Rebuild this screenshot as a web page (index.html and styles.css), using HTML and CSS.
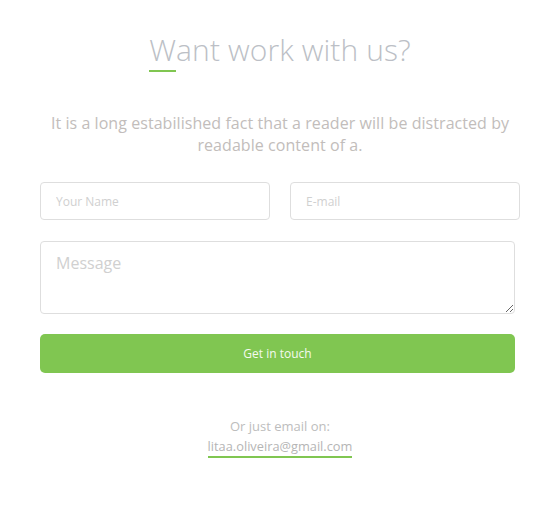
FILE: index.html
```html
<!DOCTYPE html>
<html>
<head>
<meta charset="utf-8">
<link rel="stylesheet" href="styles.css">
</head>
<body>
<section class="contact">
  <div class="heading"><h2 class="title">Want work with us?</h2></div>
  <p class="lead">It is a long estabilished fact that a reader will be distracted by readable content of a.</p>
  <form class="form">
    <div class="row">
      <input class="field" type="text" placeholder="Your Name">
      <input class="field" type="text" placeholder="E-mail">
    </div>
    <textarea class="message" placeholder="Message"></textarea>
    <button class="btn" type="button">Get in touch</button>
  </form>
  <div class="alt">
    <p class="alt-text">Or just email on:</p>
    <a class="mail" href="#">litaa.oliveira@gmail.com</a>
  </div>
</section>
</body>
</html>
```

FILE: styles.css
```css
* { box-sizing: border-box; }
body {
  margin: 0;
  background: #fff;
  font-family: "Open Sans", sans-serif;
}
.contact {
  width: 559px;
  padding: 30px 39px 0 40px;
  display: flex;
  flex-direction: column;
}
.heading {
  display: flex;
  justify-content: center;
}
.title {
  position: relative;
  margin: 0;
  font-weight: 300;
  font-size: 30px;
  letter-spacing: 0.1px;
  line-height: 40px;
  color: #bcbfc6;
}
.title::after {
  content: "";
  position: absolute;
  left: 0;
  top: 40px;
  width: 27px;
  height: 2px;
  background: #80c651;
}
.lead {
  margin: 42px 0 0;
  text-align: center;
  font-size: 16px;
  letter-spacing: 0.06px;
  line-height: 22px;
  color: #c2bdbb;
  padding: 0 8px;
}
.form {
  margin-top: 26px;
  display: flex;
  flex-direction: column;
}
.row {
  display: flex;
  gap: 20px;
}
.field {
  width: 230px;
  height: 38px;
  border: 1px solid #dedede;
  border-radius: 4px;
  padding: 0 15px;
  font-family: "Open Sans", sans-serif;
  font-size: 12px;
  color: #999;
  outline: none;
}
.field::placeholder, .message::placeholder { color: #d0d0d0; }
.message {
  margin-top: 21px;
  width: 475px;
  height: 73px;
  border: 1px solid #dedede;
  border-radius: 4px;
  padding: 10px 15px;
  font-family: "Open Sans", sans-serif;
  font-size: 16px;
  color: #999;
  outline: none;
  resize: vertical;
}
.btn {
  margin-top: 20px;
  width: 475px;
  height: 39px;
  border: none;
  border-radius: 5px;
  background: #80c651;
  color: #f4faef;
  font-family: "Open Sans", sans-serif;
  font-size: 12px;
}
.alt {
  margin-top: 42px;
  display: flex;
  flex-direction: column;
  align-items: center;
}
.alt-text {
  margin: 0;
  font-size: 13px;
  line-height: 22px;
  color: #bdbdbd;
}
.mail {
  font-size: 12.8px;
  line-height: 19px;
  color: #b5b5b5;
  text-decoration: none;
  border-bottom: 2px solid #80c651;
}
```
